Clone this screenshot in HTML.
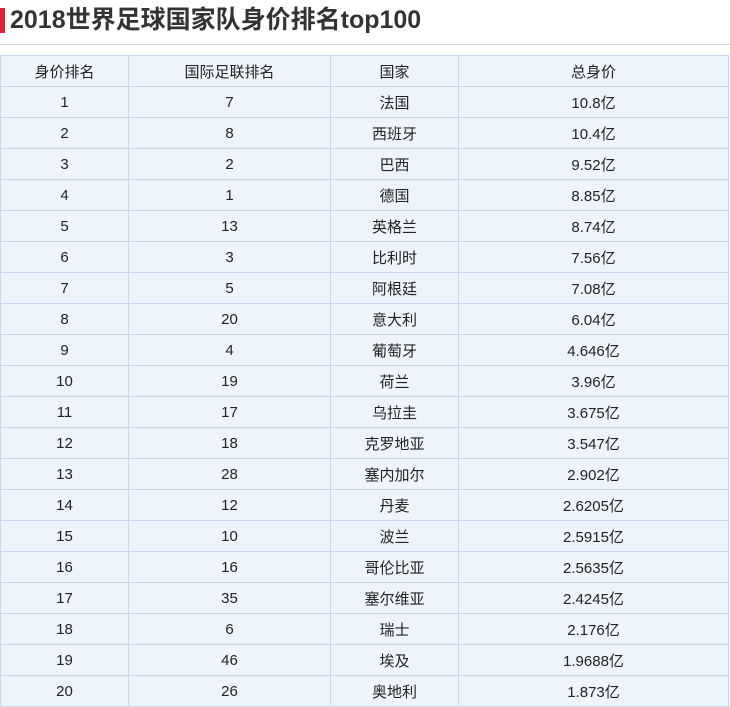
<!DOCTYPE html>
<html><head><meta charset="utf-8"><style>
body{margin:0;width:730px;height:707px;overflow:hidden;background:#fff;font-family:"Liberation Sans","Noto Sans CJK SC",sans-serif;}
.t{position:absolute;left:0;top:0;width:730px;height:44px;border-bottom:1px solid #dcdcdc;}
.bar{position:absolute;left:0;top:8px;width:5px;height:25px;background:#d9243c;}
.tt{position:absolute;left:10px;top:4px;font-size:25px;font-weight:bold;color:#333;line-height:32px;}
table{position:absolute;left:0;top:55px;border-collapse:collapse;width:729px;table-layout:fixed;}
td{border:1px solid #c6d6ee;background:#eef4fc;height:30px;padding:0;text-align:center;font-size:15px;color:#222;}
</style></head><body>
<div class="t"><div class="bar"></div><div class="tt">2018世界足球国家队身价排名top100</div></div>
<table>
<colgroup><col style="width:128px"><col style="width:202px"><col style="width:128px"><col></colgroup>
<tr><td>身价排名</td><td>国际足联排名</td><td>国家</td><td>总身价</td></tr>
<tr><td>1</td><td>7</td><td>法国</td><td>10.8亿</td></tr>
<tr><td>2</td><td>8</td><td>西班牙</td><td>10.4亿</td></tr>
<tr><td>3</td><td>2</td><td>巴西</td><td>9.52亿</td></tr>
<tr><td>4</td><td>1</td><td>德国</td><td>8.85亿</td></tr>
<tr><td>5</td><td>13</td><td>英格兰</td><td>8.74亿</td></tr>
<tr><td>6</td><td>3</td><td>比利时</td><td>7.56亿</td></tr>
<tr><td>7</td><td>5</td><td>阿根廷</td><td>7.08亿</td></tr>
<tr><td>8</td><td>20</td><td>意大利</td><td>6.04亿</td></tr>
<tr><td>9</td><td>4</td><td>葡萄牙</td><td>4.646亿</td></tr>
<tr><td>10</td><td>19</td><td>荷兰</td><td>3.96亿</td></tr>
<tr><td>11</td><td>17</td><td>乌拉圭</td><td>3.675亿</td></tr>
<tr><td>12</td><td>18</td><td>克罗地亚</td><td>3.547亿</td></tr>
<tr><td>13</td><td>28</td><td>塞内加尔</td><td>2.902亿</td></tr>
<tr><td>14</td><td>12</td><td>丹麦</td><td>2.6205亿</td></tr>
<tr><td>15</td><td>10</td><td>波兰</td><td>2.5915亿</td></tr>
<tr><td>16</td><td>16</td><td>哥伦比亚</td><td>2.5635亿</td></tr>
<tr><td>17</td><td>35</td><td>塞尔维亚</td><td>2.4245亿</td></tr>
<tr><td>18</td><td>6</td><td>瑞士</td><td>2.176亿</td></tr>
<tr><td>19</td><td>46</td><td>埃及</td><td>1.9688亿</td></tr>
<tr><td>20</td><td>26</td><td>奥地利</td><td>1.873亿</td></tr>
</table>
</body></html>
